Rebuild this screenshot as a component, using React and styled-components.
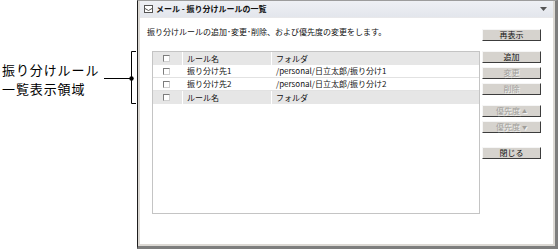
import React from "react";
import styled, { createGlobalStyle } from "styled-components";

const Global = createGlobalStyle`
  html, body { margin: 0; padding: 0; background: #fff; }
  body { font-family: "Noto Sans CJK JP", "Liberation Sans", sans-serif; color: #111; }
`;

const Page = styled.div`
  display: flex;
  align-items: flex-start;
  width: 560px;
  height: 251px;
  overflow: hidden;
`;

const Annotation = styled.div`
  width: 137px;
  display: flex;
  align-items: flex-start;
  justify-content: space-between;
  flex-shrink: 0;
`;

const AnnotationLabel = styled.div`
  margin-top: 60px;
  padding-left: 2px;
  font-size: 13px;
  letter-spacing: 0.9px;
  line-height: 19px;
  color: #000;
  white-space: nowrap;
`;

const Connector = styled.svg`
  margin-top: 50px;
  display: block;
`;

const Window = styled.div`
  width: 421px;
  height: 249px;
  box-sizing: border-box;
  border-left: 1px solid #1e1e1e;
  border-top: 1px solid #9c9c9c;
  border-right: 3px solid #7e7e7e;
  border-bottom: 3px solid #7e7e7e;
  flex-shrink: 0;
`;

const Frame = styled.div`
  height: 100%;
  box-sizing: border-box;
  border: 2px solid #dcd9d4;
  border-top: none;
  display: flex;
  flex-direction: column;
`;

const TitleBar = styled.div`
  height: 16px;
  display: flex;
  align-items: center;
  gap: 3px;
  padding: 0 6px 0 4px;
  background: linear-gradient(#eef0f4, #e3e6ec);
  border-bottom: 1px solid #e8e8ea;
`;

const TitleText = styled.span`
  font-size: 8px;
  font-weight: bold;
  line-height: 16px;
  flex: 1;
  white-space: nowrap;
`;

const Content = styled.div`
  flex: 1;
  background: #fff;
  display: grid;
  grid-template-columns: 333px 59px;
  grid-template-rows: 12px 163px;
  column-gap: 2px;
  row-gap: 10px;
  padding: 11px 0 0 7px;
`;

const Description = styled.div`
  font-size: 8px;
  line-height: 12px;
  white-space: nowrap;
  margin-top: -3px;
`;

const Table = styled.div`
  margin-left: 5px;
  border: 1px solid #c4c4c4;
  box-sizing: border-box;
  background: #fff;
`;

const Row = styled.div`
  display: grid;
  grid-template-columns: 29px 89px 1fr;
  height: 13px;
  box-sizing: border-box;
  background: ${(p) => (p.$head ? "#e6e6e6" : "#fff")};
  border-bottom: ${(p) => (p.$head ? "none" : "1px solid #e2e2e2")};
`;

const Cell = styled.div`
  display: flex;
  align-items: center;
  justify-content: ${(p) => (p.$center ? "center" : "flex-start")};
  padding-left: ${(p) => (p.$center ? "0" : "4px")};
  font-size: 8px;
  line-height: 12px;
  white-space: nowrap;
  border-left: ${(p) => (p.$first ? "none" : "1px solid #fff")};
`;

const CheckBox = styled.span`
  width: 5px;
  height: 5px;
  background: #fff;
  border: 1px solid;
  border-color: #7c7c7c #d0d0d0 #d0d0d0 #7c7c7c;
  margin-left: -3px;
`;

const ButtonStack = styled.div`
  display: flex;
  flex-direction: column;
`;

const Button = styled.button`
  width: 59px;
  height: 12px;
  padding: 0;
  margin: 0;
  margin-top: ${(p) => p.$gap || 0}px;
  box-sizing: border-box;
  background: #d6d3ce;
  border: 1px solid;
  border-color: #f6f6f6 #3c3c3c #3c3c3c #f6f6f6;
  font-family: "Noto Sans CJK JP", "Liberation Sans", sans-serif;
  font-size: 8px;
  line-height: 10px;
  color: ${(p) => (p.disabled ? "#a09e9a" : "#111")};
  text-shadow: ${(p) => (p.disabled ? "1px 1px 0 #f2f2f2" : "none")};
  display: flex;
  align-items: center;
  justify-content: center;
  gap: 2px;
`;

const Tri = styled.span`
  font-size: 5px;
  line-height: 10px;
`;

const MailIcon = () => (
  <svg width="9" height="8" viewBox="0 0 9 8">
    <rect x="0.5" y="0.5" width="8" height="7" fill="#fff" stroke="#555" />
    <polyline points="1,3.5 4.5,5.5 8,3.5" fill="none" stroke="#555" />
  </svg>
);

const MenuArrow = () => (
  <svg width="7" height="4" viewBox="0 0 7 4">
    <polygon points="0,0 7,0 3.5,4" fill="#555" />
  </svg>
);

const rows = [
  { name: "ルール名", folder: "フォルダ", head: true },
  { name: "振り分け先1", folder: "/personal/日立太郎/振り分け1" },
  { name: "振り分け先2", folder: "/personal/日立太郎/振り分け2" },
  { name: "ルール名", folder: "フォルダ", head: true },
];

export default function App() {
  return (
    <>
      <Global />
      <Page>
        <Annotation>
          <AnnotationLabel>
            振り分けルール
            <br />
            一覧表示領域
          </AnnotationLabel>
          <Connector width="36" height="55" viewBox="0 0 36 55">
            <line x1="3" y1="28.5" x2="30" y2="28.5" stroke="#000" strokeWidth="1" />
            <circle cx="30.5" cy="28.5" r="2.2" fill="#000" />
            <polyline points="35,1.5 30.5,1.5 30.5,53.5 35,53.5" fill="none" stroke="#000" strokeWidth="1" />
          </Connector>
        </Annotation>
        <Window>
          <Frame>
            <TitleBar>
              <MailIcon />
              <TitleText>メール - 振り分けルールの一覧</TitleText>
              <MenuArrow />
            </TitleBar>
            <Content>
              <Description>振り分けルールの追加･変更･削除、および優先度の変更をします。</Description>
              <Button>再表示</Button>
              <Table>
                {rows.map((r, i) => (
                  <Row key={i} $head={r.head}>
                    <Cell $center $first>
                      <CheckBox />
                    </Cell>
                    <Cell>{r.name}</Cell>
                    <Cell>{r.folder}</Cell>
                  </Row>
                ))}
              </Table>
              <ButtonStack>
                <Button>追加</Button>
                <Button disabled $gap={4}>変更</Button>
                <Button disabled $gap={4}>削除</Button>
                <Button disabled $gap={10}>
                  優先度<Tri>▲</Tri>
                </Button>
                <Button disabled $gap={4}>
                  優先度<Tri>▼</Tri>
                </Button>
                <Button $gap={14}>閉じる</Button>
              </ButtonStack>
            </Content>
          </Frame>
        </Window>
      </Page>
    </>
  );
}
